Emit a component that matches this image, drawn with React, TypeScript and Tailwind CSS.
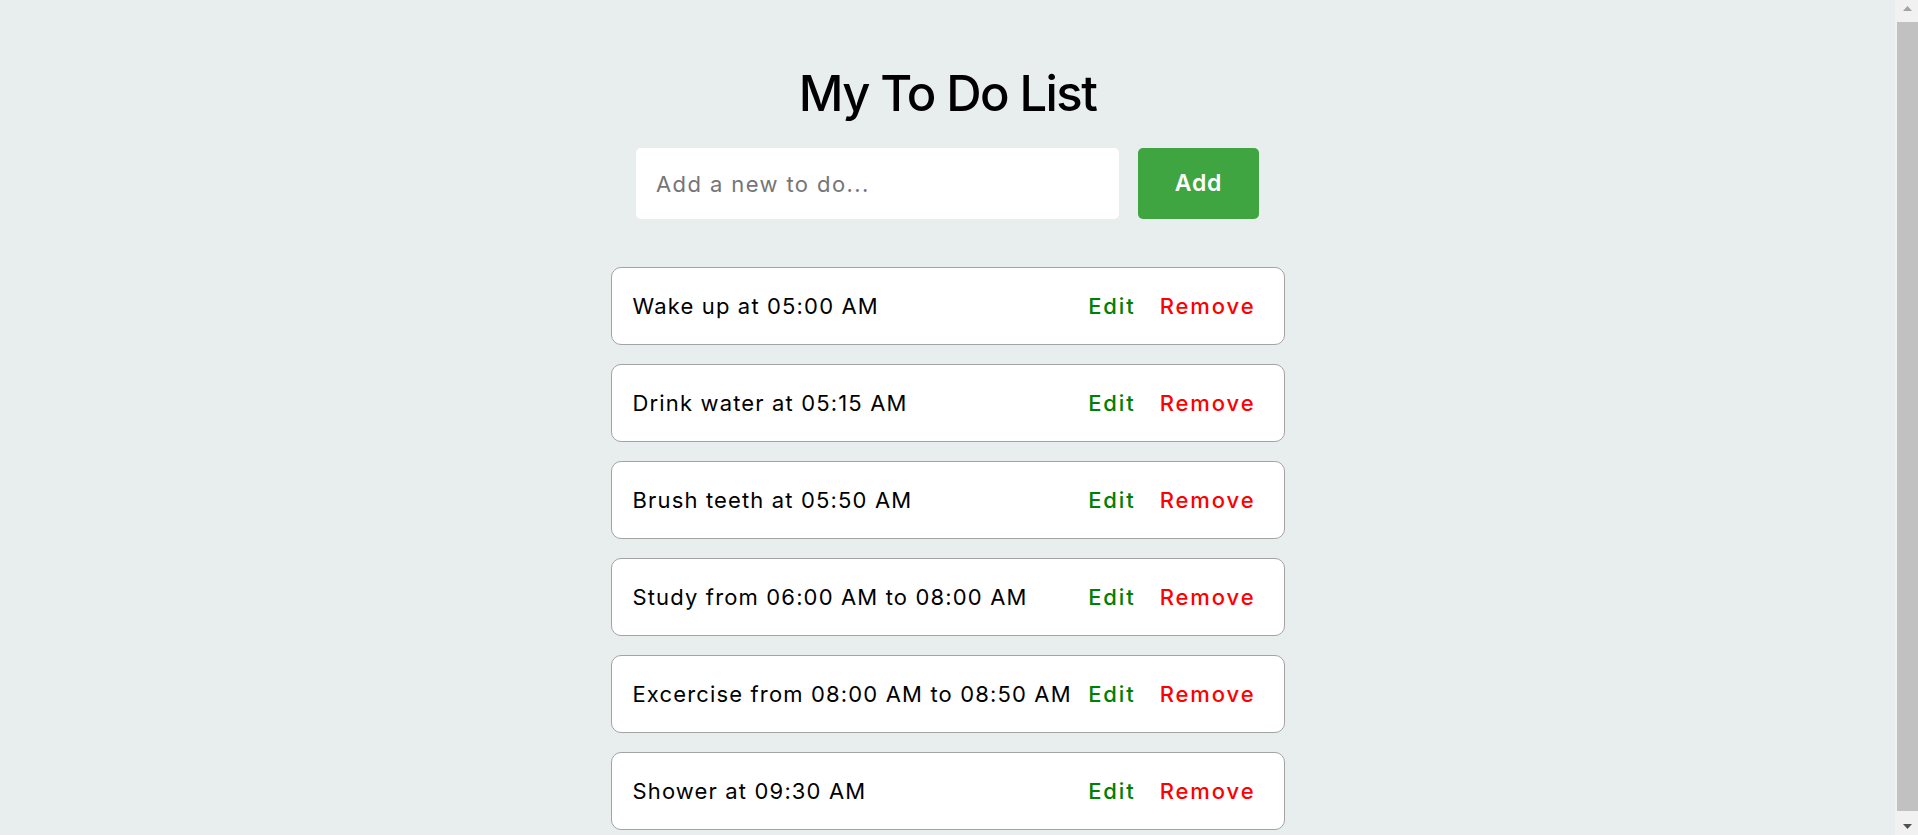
import React from "react";

const items = [
  "Wake up at 05:00 AM",
  "Drink water at 05:15 AM",
  "Brush teeth at 05:50 AM",
  "Study from 06:00 AM to 08:00 AM",
  "Excercise from 08:00 AM to 08:50 AM",
  "Shower at 09:30 AM",
];

export default function App() {
  return (
    <div
      className="flex h-[835px] w-full overflow-hidden bg-[#e8eeee] text-black"
      style={{ fontFamily: "Inter, 'Noto Sans', sans-serif" }}
    >
      <main className="flex flex-1 flex-col items-center pt-[64px]">
        <h1 className="text-[49px] font-medium leading-[60px] tracking-[-1.6px]">My To Do List</h1>
        <div className="mt-[24px] flex gap-[19px]">
          <input
            className="h-[71px] w-[483px] rounded-[5px] bg-white px-[20px] text-[22px] tracking-[1.4px] outline-none placeholder:text-[#757575]"
            placeholder="Add a new to do..."
          />
          <button className="h-[71px] w-[121px] rounded-[5px] bg-[#3ea541] text-[23px] font-semibold tracking-[0.8px] text-white">
            Add
          </button>
        </div>
        <ul className="mt-[48px] flex w-[674px] flex-col gap-[19px]">
          {items.map((t) => (
            <li
              key={t}
              className="flex h-[78px] items-center justify-between gap-[6px] rounded-[10px] border border-[#a3a3a3] bg-white pl-[21px] pr-[28px]"
            >
              <span className="whitespace-nowrap text-[22px] tracking-[1.15px]">{t}</span>
              <span className="flex shrink-0 gap-[24px] whitespace-nowrap text-[22px] font-medium tracking-[1.9px]">
                <span className="text-[#008000]">Edit</span>
                <span className="text-[#ff0000]">Remove</span>
              </span>
            </li>
          ))}
        </ul>
      </main>
      <div className="flex w-[23px] flex-col bg-[#f1f1f1] pl-[2px]">
        <div className="flex h-[17px] items-center justify-center">
          <svg width="9" height="5" viewBox="0 0 9 5">
            <path d="M4.5 0 L9 5 L0 5 Z" fill="#a3a3a3" />
          </svg>
        </div>
        <div className="mt-[5px] mb-[7px] flex-1 bg-[#c1c1c1]" />
        <div className="flex h-[17px] items-center justify-center">
          <svg width="9" height="5" viewBox="0 0 9 5">
            <path d="M0 0 L9 0 L4.5 5 Z" fill="#505050" />
          </svg>
        </div>
      </div>
    </div>
  );
}
